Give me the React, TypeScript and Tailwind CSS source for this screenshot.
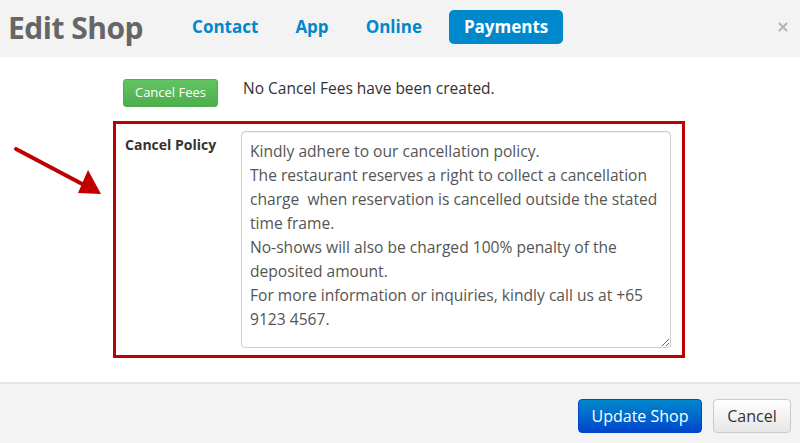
import { X } from 'lucide-react';

const tabs = ['Contact', 'App', 'Online', 'Payments'];

const policyText = [
    'Kindly adhere to our cancellation policy.',
    'The restaurant reserves a right to collect a cancellation',
    'charge  when reservation is cancelled outside the stated',
    'time frame.',
    'No-shows will also be charged 100% penalty of the',
    'deposited amount.',
    'For more information or inquiries, kindly call us at +65',
    '9123 4567.',
].join('\n');

export default function App() {
    return (
        <div className="relative w-[800px] h-[443px] flex flex-col bg-white overflow-hidden" style={{ fontFamily: '"Open Sans", "Noto Sans", sans-serif' }}>
            {/* Header */}
            <div className="h-[57px] bg-[#f3f3f3] flex items-center pl-[8px] pr-[10px] shrink-0">
                <h1 className="text-[30px] font-bold text-[#666] leading-none tracking-[-0.5px] mt-[-2px]">Edit Shop</h1>
                <nav className="flex items-center ml-[39px] gap-[17px] mt-[-4px]">
                    {tabs.map((t) => (
                        <span
                            key={t}
                            className={
                                t === 'Payments'
                                    ? 'px-[15px] h-[34px] flex items-center rounded-[5px] bg-[#0088cc] text-white text-[17px] font-bold'
                                    : 'px-[10px] h-[34px] flex items-center text-[#0088cc] text-[17px] font-bold'
                            }
                        >
                            {t}
                        </span>
                    ))}
                </nav>
                <X className="ml-auto w-[14px] h-[14px] text-[#b5b5b5] mt-[-4px]" strokeWidth={3.5} />
            </div>

            {/* Body */}
            <div className="flex-1 flex flex-col">
                <div className="flex items-center ml-[123px] mt-[22px] gap-[25px]">
                    <button className="w-[95px] h-[28px] rounded-[3px] border border-[#4cae4c] bg-gradient-to-b from-[#62c462] to-[#4cae4c] text-white text-[13px]">
                        Cancel Fees
                    </button>
                    <span className="text-[15.5px] text-[#333] mt-[-9px]">No Cancel Fees have been created.</span>
                </div>

                <div className="ml-[113px] mt-[14px] w-[572px] h-[237px] border-[3px] border-[#c00000] flex pl-[9px] pt-[7px]">
                    <label className="w-[116px] text-[14px] font-bold text-[#333] pt-[3px]">Cancel Policy</label>
                    <textarea
                        readOnly
                        wrap="off"
                        value={policyText}
                        className="w-[430px] h-[217px] border border-[#ccc] rounded-[4px] px-[8px] py-[7px] text-[15.6px] leading-[24px] text-[#555] overflow-hidden resize-y outline-none shadow-[inset_0_1px_1px_rgba(0,0,0,0.075)]"
                    />
                </div>
            </div>

            {/* Footer */}
            <div className="h-[61px] shrink-0 bg-[#f3f3f3] border-t-2 border-[#e5e5e5] flex items-center justify-end gap-[11px] pr-[9px] pt-[4px]">
                <button className="w-[124px] h-[34px] rounded-[4px] border border-[#0044cc] bg-gradient-to-b from-[#0088cc] to-[#0044cc] text-white text-[16px]">
                    Update Shop
                </button>
                <button className="w-[78px] h-[34px] rounded-[4px] border border-[#ccc] bg-gradient-to-b from-white to-[#e6e6e6] text-[#333] text-[16px]">
                    Cancel
                </button>
            </div>

            {/* Annotation arrow */}
            <svg className="absolute left-0 top-[140px] pointer-events-none" width="110" height="60" viewBox="0 140 110 60">
                <line x1="16" y1="149" x2="86" y2="186" stroke="#c00000" strokeWidth="4" strokeLinecap="round" />
                <polygon points="88,170 78,193 101,194" fill="#c00000" />
            </svg>
        </div>
    );
}
